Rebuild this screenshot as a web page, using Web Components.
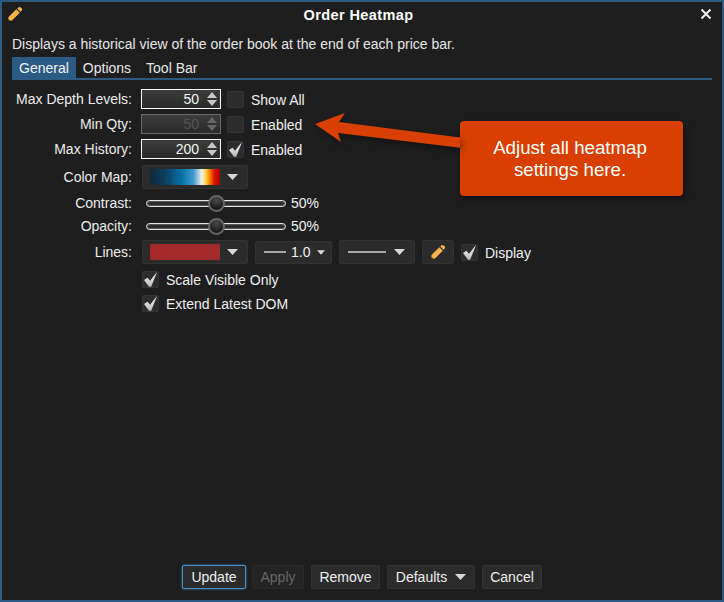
<!DOCTYPE html>
<html>
<head>
<meta charset="utf-8">
<title>Order Heatmap</title>
<style>
  html, body { margin: 0; padding: 0; background: #1e1e1e; }
  body { font: 14px "Liberation Sans", Arial, sans-serif; color: #f2f2f2; }
</style>
</head>
<body>
<hm-dialog heading="Order Heatmap">
  <span slot="description">Displays a historical view of the order book at the end of each price bar.</span>
  <hm-tab slot="tabs" active>General</hm-tab>
  <hm-tab slot="tabs">Options</hm-tab>
  <hm-tab slot="tabs" style="margin-left:1px">Tool Bar</hm-tab>

  <hm-row label="Max Depth Levels:" h="24">
    <hm-spinner value="50"></hm-spinner>
    <hm-check>Show All</hm-check>
  </hm-row>
  <hm-row label="Min Qty:" h="26">
    <hm-spinner value="50" disabled></hm-spinner>
    <hm-check>Enabled</hm-check>
  </hm-row>
  <hm-row label="Max History:" h="24">
    <hm-spinner value="200"></hm-spinner>
    <hm-check checked>Enabled</hm-check>
  </hm-row>
  <hm-row label="Color Map:" h="32" indent>
    <hm-dropdown width="106">
      <div style="width:70px;height:16px;background:linear-gradient(90deg,#0f2838 0%,#0c3f5e 22%,#0670a8 45%,#3d9ad0 62%,#f2f2ea 74%,#ffd040 80%,#f58a00 85%,#e01000 92%,#a80000 100%)"></div>
    </hm-dropdown>
  </hm-row>
  <hm-row label="Contrast:" h="20"><hm-slider value="50%"></hm-slider></hm-row>
  <hm-row label="Opacity:" h="26"><hm-slider value="50%"></hm-slider></hm-row>
  <hm-row label="Lines:" h="26" indent>
    <hm-dropdown width="106"><div style="width:70px;height:16px;background:#a52a2a"></div></hm-dropdown>
    <hm-dropdown width="77" small>
      <div style="width:22px;height:2px;background:#a8a8a8;margin:0 5px 0 1px"></div><span>1.0</span>
    </hm-dropdown>
    <hm-dropdown width="76">
      <div style="width:38px;height:2px;background:#a8a8a8;margin-left:1px"></div>
    </hm-dropdown>
    <hm-pencil-button></hm-pencil-button>
    <hm-check checked>Display</hm-check>
  </hm-row>
  <hm-row h="28" indent><hm-check checked>Scale Visible Only</hm-check></hm-row>
  <hm-row h="20" indent><hm-check checked>Extend Latest DOM</hm-check></hm-row>

  <hm-callout slot="overlay">Adjust all heatmap<br>settings here.</hm-callout>

  <hm-button slot="footer" focused style="width:64px">Update</hm-button>
  <hm-button slot="footer" disabled style="width:52px;margin-left:-1px">Apply</hm-button>
  <hm-button slot="footer" style="width:69px">Remove</hm-button>
  <hm-button slot="footer" caret style="width:88px">Defaults</hm-button>
  <hm-button slot="footer" style="width:60px">Cancel</hm-button>
</hm-dialog>

<script>
const PENCIL = `<svg width="16" height="16" viewBox="0 0 16 16"><path fill="#f9b347" d="M11.3 1.4C12 .7 13 .7 13.7 1.4L14.6 2.3C15.3 3 15.3 4 14.6 4.7L13.6 5.7 10.3 2.4Z"/><path fill="#f9b347" d="M9.3 3.2 12.8 6.7 5 14.5 1 15 1.5 11Z"/><path fill="#4a3310" d="M1 15 1.3 12.6 3.4 14.7Z"/></svg>`;
const CARET = `<svg width="11" height="6" viewBox="0 0 11 6"><path fill="#d8d8d8" d="M0 0H11L5.5 6Z"/></svg>`;

class HmDialog extends HTMLElement {
  constructor() {
    super();
    this.attachShadow({ mode: 'open' });
    this.shadowRoot.innerHTML = `
      <style>
        :host { display: block; position: relative; width: 724px; height: 602px; box-sizing: border-box;
          border: 2px solid #2b5a85; background: #1e1e1e; }
        .wrap { display: flex; flex-direction: column; height: 100%; }
        header { display: flex; align-items: center; justify-content: space-between; height: 26px; padding: 0 10px 0 5px; flex: none; }
        h1 { font: bold 14.5px "Liberation Sans", Arial, sans-serif; letter-spacing: .4px; color: #fff; margin: 0 0 0 -6px; }
        header svg { display: block; margin-top: -2px; }
        .desc { padding: 9px 10px 0; line-height: 15px; flex: none; height: 20px; color: #e6e6e6; }
        .tabs { display: flex; margin: 0 10px; border-bottom: 2px solid #2b5a85; height: 21px; flex: none; }
        .form { padding-top: 7px; }
        footer { margin-top: auto; display: flex; justify-content: center; gap: 7px; padding-bottom: 11px; }
      </style>
      <div class="wrap">
        <header>
          ${PENCIL}
          <h1>${this.getAttribute('heading')}</h1>
          <svg width="12" height="12" viewBox="0 0 12 12"><path d="M1.5 1.5 10.5 10.5M10.5 1.5 1.5 10.5" stroke="#f2f2f2" stroke-width="2" fill="none"/></svg>
        </header>
        <div class="desc"><slot name="description"></slot></div>
        <div class="tabs"><slot name="tabs"></slot></div>
        <div class="form"><slot></slot></div>
        <footer><slot name="footer"></slot></footer>
      </div>
      <slot name="overlay"></slot>`;
  }
}

class HmTab extends HTMLElement {
  constructor() {
    super();
    this.attachShadow({ mode: 'open' });
    this.shadowRoot.innerHTML = `
      <style>
        :host { display: block; padding: 0 7px; line-height: 23px; height: 21px; color: #e8e8e8; }
        :host([active]) { background: #2b5a85; color: #f4f4f4; }
      </style>
      <slot></slot>`;
  }
}

class HmRow extends HTMLElement {
  constructor() {
    super();
    this.attachShadow({ mode: 'open' });
    const label = this.getAttribute('label') || '';
    this.shadowRoot.innerHTML = `
      <style>
        :host { display: flex; align-items: center; height: ${this.getAttribute('h')}px; }
        label { width: 120px; margin-left: 10px; text-align: right; flex: none; color: #ececec; }
        .fields { display: flex; align-items: center; gap: 7px; margin-left: 9px; }
        :host([indent]) .fields { margin-left: 10px; }
      </style>
      <label>${label}</label>
      <div class="fields"><slot></slot></div>`;
  }
}

class HmSpinner extends HTMLElement {
  constructor() {
    super();
    this.attachShadow({ mode: 'open' });
    this.shadowRoot.innerHTML = `
      <style>
        :host { display: flex; align-items: center; justify-content: flex-end; width: 80px; height: 20px; box-sizing: border-box;
          border: 1px solid #fff; margin-right: -1px;
          background: linear-gradient(#3c3c3c, #2a2a2a); padding-right: 3px; gap: 8px; color: #f4f4f4; }
        :host([disabled]) { border-color: #6a6a6a; color: #555; }
        svg { display: block; }
        :host([disabled]) path { fill: #666; }
      </style>
      <span>${this.getAttribute('value')}</span>
      <svg width="10" height="14" viewBox="0 0 10 14"><path fill="#c8c8c8" d="M5 0 10 6H0ZM0 8H10L5 14Z"/></svg>`;
  }
}

class HmCheck extends HTMLElement {
  constructor() {
    super();
    this.attachShadow({ mode: 'open' });
    const tick = this.hasAttribute('checked')
      ? `<svg width="15" height="15" viewBox="0 0 15 15"><defs><linearGradient id="t" x1="0" y1="0" x2="0" y2="1"><stop offset="0" stop-color="#fff"/><stop offset="1" stop-color="#b8b8b8"/></linearGradient></defs><path d="M1 8 4.5 5.8 7 8.8 14 0 8.2 14.7H6Z" fill="url(#t)"/></svg>` : '';
    this.shadowRoot.innerHTML = `
      <style>
        :host { display: flex; align-items: center; gap: 7px; color: #f0f0f0; }
        .box { width: 17px; height: 17px; box-sizing: border-box; background: #2c2c2c; border: 1px solid #343434; border-radius: 2px;
          display: flex; align-items: center; justify-content: center; flex: none; }
        svg { display: block; }
        span { position: relative; top: 1px; }
      </style>
      <div class="box">${tick}</div>
      <span><slot></slot></span>`;
  }
}

class HmDropdown extends HTMLElement {
  constructor() {
    super();
    this.attachShadow({ mode: 'open' });
    this.shadowRoot.innerHTML = `
      <style>
        :host { display: flex; align-items: center; justify-content: space-between; width: ${this.getAttribute('width')}px; height: 24px;
          box-sizing: border-box; padding: 0 9px 0 7px; background: #2b2b2b; border: 1px solid #333; border-radius: 2px; }
        :host([small]) { padding: 0 6px 0 7px; height: 23px; }
        :host([small]) svg { width: 8px; height: 5px; }
        .inner { display: flex; align-items: center; }
        svg { display: block; }
      </style>
      <div class="inner"><slot></slot></div>${CARET}`;
  }
}

class HmSlider extends HTMLElement {
  constructor() {
    super();
    this.attachShadow({ mode: 'open' });
    this.shadowRoot.innerHTML = `
      <style>
        :host { display: flex; align-items: center; gap: 5px; margin-left: 5px; }
        .track { position: relative; width: 140px; height: 7px; box-sizing: border-box; border: 1px solid #e6e6e6; border-radius: 4px; background: #2c2c2c;
          box-shadow: inset 0 0 0 1px rgba(255,255,255,.2); }
        .thumb { position: absolute; left: 61px; top: -6px; width: 17px; height: 17px; box-sizing: border-box; border-radius: 50%;
          border: 2px solid #666; background: radial-gradient(circle at 50% 25%, #4c4c4c, #181818 75%); }
      </style>
      <div class="track"><div class="thumb"></div></div>
      <span>${this.getAttribute('value')}</span>`;
  }
}

class HmPencilButton extends HTMLElement {
  constructor() {
    super();
    this.attachShadow({ mode: 'open' });
    this.shadowRoot.innerHTML = `
      <style>
        :host { display: flex; align-items: center; justify-content: center; width: 32px; height: 24px; box-sizing: border-box;
          background: #2b2b2b; border: 1px solid #333; border-radius: 2px; }
        svg { display: block; }
      </style>
      ${PENCIL}`;
  }
}

class HmButton extends HTMLElement {
  constructor() {
    super();
    this.attachShadow({ mode: 'open' });
    this.shadowRoot.innerHTML = `
      <style>
        :host { display: flex; align-items: center; justify-content: center; gap: 8px; height: 24px; box-sizing: border-box;
          background: #2b2b2b; border: 1px solid #333; border-radius: 2px; color: #f0f0f0; }
        :host([focused]) { border: 1px solid #4a90d0; box-shadow: 0 0 2px #4a90d0; }
        :host([disabled]) { background: #242424; color: #666; border-color: #2a2a2a; }
        svg { display: block; }
      </style>
      <slot></slot>${this.hasAttribute('caret') ? CARET : ''}`;
  }
}

class HmCallout extends HTMLElement {
  constructor() {
    super();
    this.attachShadow({ mode: 'open' });
    this.shadowRoot.innerHTML = `
      <style>
        :host { position: absolute; left: 458px; top: 119px; width: 223px; height: 75px; box-sizing: border-box; padding-right: 3px; display: flex; align-items: center; justify-content: center;
          text-align: center; background: #d83f00; border-radius: 4px; color: #fff; font-size: 18.7px; line-height: 22px;
          box-shadow: 2px 3px 6px rgba(0,0,0,.45); }
        svg { position: absolute; left: -146px; top: -13px; filter: drop-shadow(2px 3px 3px rgba(0,0,0,.4)); }
      </style>
      <svg width="148" height="42" viewBox="0 0 148 42"><path fill="#d83f00" d="M1 16 31 5 25 14 146 29.5V39.7L24 25 27 34Z"/></svg>
      <span><slot></slot></span>`;
  }
}

customElements.define('hm-dialog', HmDialog);
customElements.define('hm-tab', HmTab);
customElements.define('hm-row', HmRow);
customElements.define('hm-spinner', HmSpinner);
customElements.define('hm-check', HmCheck);
customElements.define('hm-dropdown', HmDropdown);
customElements.define('hm-slider', HmSlider);
customElements.define('hm-pencil-button', HmPencilButton);
customElements.define('hm-button', HmButton);
customElements.define('hm-callout', HmCallout);
</script>
</body>
</html>
